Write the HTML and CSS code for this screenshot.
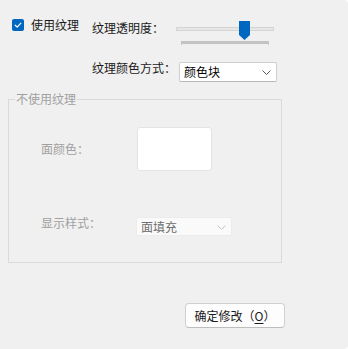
FILE: index.html
```html
<!DOCTYPE html>
<html lang="zh-CN">
<head>
<meta charset="utf-8">
<link rel="stylesheet" href="styles.css">
</head>
<body>
<div class="window">
  <div class="top">
    <label class="check">
      <span class="box">
        <svg width="12" height="12" viewBox="0 0 12 12"><path d="M3.2 6.2 L5.2 8.1 L8.9 4.2" fill="none" stroke="#fff" stroke-width="1.2" stroke-linecap="round" stroke-linejoin="round"/></svg>
      </span>
      <span class="check-text">使用纹理</span>
    </label>
    <div class="options">
      <span class="lbl lbl-1">纹理透明度：</span>
      <div class="slider">
        <div class="track"></div>
        <svg class="thumb" width="11" height="19" viewBox="0 0 11 19"><polygon points="0,0 11,0 11,14 5.5,19 0,14" fill="#0067c0"/></svg>
        <div class="ticks"></div>
      </div>
      <span class="lbl lbl-2">纹理颜色方式：</span>
      <div class="select">
        <span>颜色块</span>
        <svg width="9" height="5" viewBox="0 0 9 5"><path d="M0.5 0.5 L4.5 4.5 L8.5 0.5" fill="none" stroke="#5a5a5a" stroke-width="1"/></svg>
      </div>
    </div>
  </div>

  <fieldset class="group">
    <legend>不使用纹理</legend>
    <div class="group-grid">
      <span class="dlbl dlbl-1">面颜色：</span>
      <div class="color-box"></div>
      <span class="dlbl dlbl-2">显示样式：</span>
      <div class="select select-disabled">
        <span>面填充</span>
        <svg width="9" height="5" viewBox="0 0 9 5"><path d="M0.5 0.5 L4.5 4.5 L8.5 0.5" fill="none" stroke="#c4c4c4" stroke-width="1"/></svg>
      </div>
    </div>
  </fieldset>

  <div class="actions">
    <button class="btn">确定修改（<u>O</u>）</button>
  </div>
</div>
</body>
</html>
```

FILE: styles.css
```css
html, body {
  margin: 0;
  padding: 0;
  background: #ffffff;
}
body {
  font-family: "Noto Sans CJK SC", "Noto Sans", sans-serif;
  font-size: 12px;
  line-height: 14px;
  color: #1a1a1a;
}
.window {
  width: 348px;
  height: 349px;
  box-sizing: border-box;
  background: #f0f0f0;
  border-radius: 0 4px 4px 0;
  display: flex;
  flex-direction: column;
}
.top {
  display: flex;
  padding-top: 19px;
}
.check {
  display: flex;
  align-items: flex-start;
  width: 92px;
  padding-left: 12px;
  box-sizing: border-box;
}
.box {
  width: 12px;
  height: 12px;
  background: #0067c0;
  border-radius: 2px;
  display: block;
}
.box svg { display: block; }
.check-text {
  margin-left: 7px;
  margin-top: -1px;
}
.options {
  display: grid;
  grid-template-columns: 84px auto;
  row-gap: 17px;
  margin-top: 2px;
}
.lbl-2 { margin-top: -1px; }
.slider {
  position: relative;
  width: 98px;
  height: 24px;
}
.track {
  position: absolute;
  left: 0;
  top: 6px;
  width: 98px;
  height: 4px;
  box-sizing: border-box;
  background: #e6e6e6;
  border: 1px solid #d4d4d4;
}
.thumb {
  position: absolute;
  left: 63px;
  top: 0;
  display: block;
}
.ticks {
  position: absolute;
  left: 5px;
  top: 20px;
  width: 88px;
  height: 3px;
  background: #c3c3c3;
}
.ticks::before,
.ticks::after {
  content: "";
  position: absolute;
  top: 3px;
  width: 1px;
  height: 1px;
  background: #c3c3c3;
}
.ticks::before { left: 0; }
.ticks::after { right: 0; }
.select {
  width: 98px;
  height: 20px;
  box-sizing: border-box;
  margin-left: 3px;
  background: #ffffff;
  border: 1px solid #cfcfcf;
  border-bottom-color: #b8b8b8;
  border-radius: 2px;
  display: flex;
  align-items: center;
  justify-content: space-between;
  padding: 0 5px 0 4px;
  color: #000;
}
.select svg { display: block; margin-top: 1px; }
.group {
  margin: 10px 0 0 8px;
  width: 274px;
  height: 171px;
  box-sizing: border-box;
  border: 1px solid #dadada;
  padding: 0 0 0 6px;
}
.group legend {
  padding: 0 1px;
  color: #a0a0a0;
  line-height: 14px;
}
.group-grid {
  display: grid;
  grid-template-columns: 95px auto;
  padding-left: 26px;
  padding-top: 21px;
  row-gap: 46px;
  align-items: center;
}
.dlbl { color: #a0a0a0; }
.dlbl-2 { align-self: start; margin-top: -1px; }
.color-box {
  width: 75px;
  height: 44px;
  box-sizing: border-box;
  margin-left: 1px;
  background: #ffffff;
  border: 1px solid #e4e4e4;
  border-radius: 3px;
}
.select-disabled {
  margin-left: 0;
  width: 96px;
  height: 19px;
  background: #fafafa;
  border: 1px solid #ececec;
  color: #6d6d6d;
}
.actions {
  display: flex;
  padding-left: 185px;
  margin-top: 40px;
}
.btn {
  width: 100px;
  height: 25px;
  box-sizing: border-box;
  background: #fdfdfd;
  border: 1px solid #d0d0d0;
  border-bottom-color: #bdbdbd;
  border-radius: 4px;
  font-family: inherit;
  font-size: 12px;
  line-height: 14px;
  color: #1a1a1a;
  padding: 0;
}
.btn u { text-underline-offset: 2px; }
```
